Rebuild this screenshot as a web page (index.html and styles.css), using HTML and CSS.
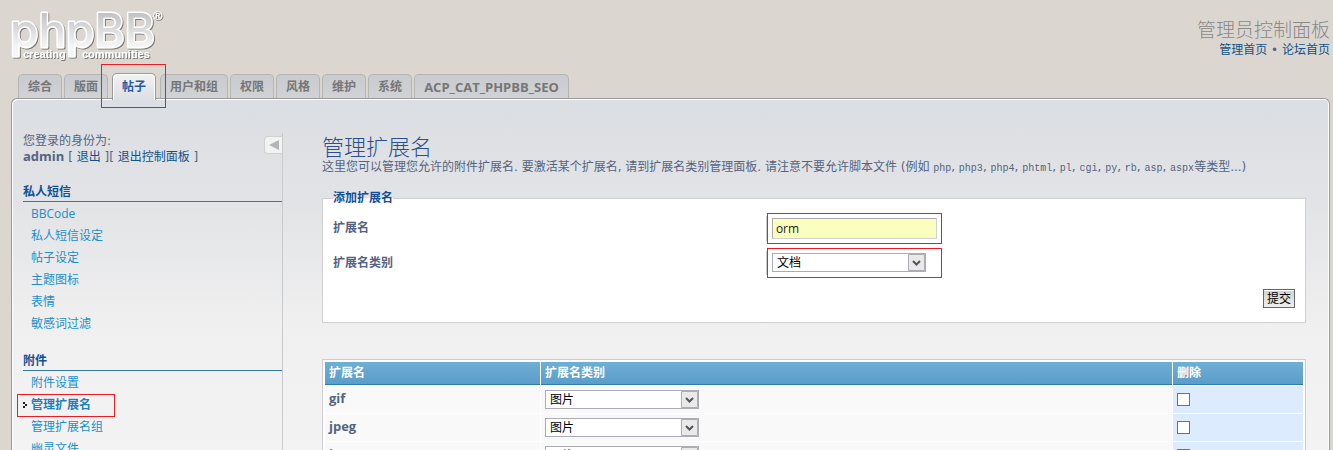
FILE: index.html
```html
<!DOCTYPE html>
<html lang="zh-CN">
<head>
<meta charset="utf-8">
<title>管理员控制面板</title>
<link rel="stylesheet" href="styles.css">
</head>
<body>
<header class="top">
  <svg class="logo" width="156" height="66" viewBox="0 0 156 66" role="img" aria-label="phpBB creating communities">
    <defs>
      <linearGradient id="metal" x1="0" y1="0" x2="0" y2="1">
        <stop offset="0.2" stop-color="#c2c2c2"/>
        <stop offset="0.8" stop-color="#f6f6f6"/>
      </linearGradient>
      <filter id="shade" x="-10%" y="-10%" width="120%" height="130%">
        <feDropShadow dx="1" dy="1" stdDeviation="0.7" flood-color="#666" flood-opacity="0.85"/>
      </filter>
    </defs>
    <g filter="url(#shade)">
      <text class="logo-word" x="-1" y="47">phpBB</text>
      <text class="logo-tag" x="12" y="58">creating</text>
      <text class="logo-tag" x="71" y="58">communities</text>
      <text class="logo-mark" x="142" y="20">®</text>
    </g>
  </svg>
  <div class="site">
    <p class="site-title">管理员控制面板</p>
    <p class="site-links"><a href="#">管理首页</a> • <a href="#">论坛首页</a></p>
  </div>
</header>

<nav class="tabs">
  <a class="tab" href="#">综合</a>
  <a class="tab" href="#">版面</a>
  <a class="tab active" href="#">帖子</a>
  <a class="tab" href="#">用户和组</a>
  <a class="tab" href="#">权限</a>
  <a class="tab" href="#">风格</a>
  <a class="tab" href="#">维护</a>
  <a class="tab" href="#">系统</a>
  <a class="tab latin" href="#">ACP_CAT_PHPBB_SEO</a>
</nav>

<div class="panel">
  <aside class="side">
    <button class="collapse" type="button" aria-label="收起菜单"><svg width="10" height="10" viewBox="0 0 10 10"><path d="M0 5 10 0V10Z" fill="#b5b5b9"/></svg></button>
    <p class="login">您登录的身份为:<br><strong class="latin">admin</strong> [ <a href="#">退出</a> ][ <a href="#">退出控制面板</a> ]</p>
    <h2 class="menu-title">私人短信</h2>
    <ul class="menu">
      <li><a href="#">BBCode</a></li>
      <li><a href="#">私人短信设定</a></li>
      <li><a href="#">帖子设定</a></li>
      <li><a href="#">主题图标</a></li>
      <li><a href="#">表情</a></li>
      <li><a href="#">敏感词过滤</a></li>
    </ul>
    <h2 class="menu-title">附件</h2>
    <ul class="menu">
      <li><a href="#">附件设置</a></li>
      <li class="current"><svg class="pointer" width="4" height="6" viewBox="0 0 4 6"><path d="M0 0H2V2H4V4H2V6H0V4H2V2H0Z" fill="#222"/></svg><a href="#">管理扩展名</a></li>
      <li><a href="#">管理扩展名组</a></li>
      <li><a href="#">幽灵文件</a></li>
    </ul>
  </aside>

  <main class="main">
    <h1 class="title">管理扩展名</h1>
    <p class="intro">这里您可以管理您允许的附件扩展名. 要激活某个扩展名, 请到扩展名类别管理面板. 请注意不要允许脚本文件 (例如 <code>php</code>, <code>php3</code>, <code>php4</code>, <code>phtml</code>, <code>pl</code>, <code>cgi</code>, <code>py</code>, <code>rb</code>, <code>asp</code>, <code>aspx</code>等类型...)</p>

    <form>
      <fieldset class="box">
        <legend>添加扩展名</legend>
        <div class="row">
          <label for="ext">扩展名</label>
          <div class="field marked"><input class="text" id="ext" type="text" value="orm"></div>
        </div>
        <div class="row">
          <label for="group">扩展名类别</label>
          <div class="field marked"><select class="select" id="group"><option>文档</option><option>图片</option></select></div>
        </div>
        <div class="actions"><button class="submit" type="submit">提交</button></div>
      </fieldset>

      <table class="list">
        <thead>
          <tr><th class="col-ext">扩展名</th><th>扩展名类别</th><th class="col-del">删除</th></tr>
        </thead>
        <tbody>
          <tr><td><strong class="latin">gif</strong></td><td><select class="select" aria-label="gif 类别"><option>图片</option></select></td><td class="del"><input class="check" type="checkbox" aria-label="删除 gif"></td></tr>
          <tr><td><strong class="latin">jpeg</strong></td><td><select class="select" aria-label="jpeg 类别"><option>图片</option></select></td><td class="del"><input class="check" type="checkbox" aria-label="删除 jpeg"></td></tr>
          <tr><td><strong class="latin">jpg</strong></td><td><select class="select" aria-label="jpg 类别"><option>图片</option></select></td><td class="del"><input class="check" type="checkbox" aria-label="删除 jpg"></td></tr>
        </tbody>
      </table>
    </form>
  </main>
</div>
</body>
</html>
```
FILE: styles.css
```css
*, *::after { box-sizing: border-box; }

body {
  margin: 0;
  padding: 0 3px 0 11px;
  height: 100vh;
  overflow: hidden;
  display: flex;
  flex-direction: column;
  background: #dbd7d0;
  color: #536482;
  font: 12px/16px "Open Sans", "Noto Sans CJK SC", sans-serif;
}

h1, h2, p, ul { margin: 0; padding: 0; font-weight: normal; }
ul { list-style: none; }
a { color: #105289; text-decoration: none; }
input, select, button { margin: 0; font: inherit; color: #000; }
.latin { font-size: 13px; }

/* Header */
.top {
  flex: none;
  display: flex;
  justify-content: space-between;
  align-items: flex-start;
  height: 73px;
}
.logo { overflow: visible; }
.logo-word {
  font: 500 46px Inter, sans-serif;
  fill: url(#metal);
  stroke: #fff;
  stroke-width: 3px;
  stroke-linejoin: round;
  paint-order: stroke;
}
.logo-tag { font: 700 11px "Liberation Sans", sans-serif; fill: #fff; }
.logo-mark { font: 700 13px "Liberation Sans", sans-serif; fill: #fff; }
.site { padding-top: 18px; text-align: right; }
.site-title {
  color: #888;
  font-size: 19px;
  font-weight: 300;
  line-height: 24px;
}
.site-links, .login, .intro { font-family: "DejaVu Sans", "Noto Sans CJK SC", sans-serif; }

/* Tabs */
.tabs {
  flex: none;
  position: relative;
  display: flex;
  align-items: flex-end;
  gap: 2px;
  height: 25px;
  padding-left: 7px;
}
.tab {
  height: 24px;
  padding: 0 9px;
  border: 1px solid #b5b5b2;
  border-bottom: 0;
  border-radius: 5px 5px 0 0;
  background: linear-gradient(#cacbce, #d0d2d6);
  color: #767676;
  font-weight: 700;
  line-height: 24px;
}
.active {
  position: relative;
  z-index: 1;
  height: 27px;
  margin: 0 2px -2px;
  border-color: #999;
  box-shadow: inset 1px 1px #fff, inset -1px 0 #fff;
  background: linear-gradient(#f2f2f3, #dcdee2);
  color: #1d5aa5;
  line-height: 26px;
}
.active::after {
  content: "";
  position: absolute;
  inset: -10px -11px -8px -12px;
  border: 1px solid #ed1c24;
}

/* Panel */
.panel {
  flex: 1 0 auto;
  display: flex;
  align-items: flex-start;
  gap: 39px;
  padding: 34px 23px 0 11px;
  border: 1px solid #999;
  border-bottom: 0;
  border-radius: 6px 6px 0 0;
  box-shadow: inset 1px 1px #fff, inset -1px 0 #fff;
  background: linear-gradient(#dbdee2, #e2e3e6 100px, #f0f0f0 230px, #f3f3f3 350px);
}

/* Side menu */
.side {
  position: relative;
  flex: 0 0 260px;
  min-height: 330px;
  border-right: 1px solid #c8cacd;
}
.collapse {
  position: absolute;
  top: 3px;
  right: 0;
  display: grid;
  place-items: center;
  width: 18px;
  height: 18px;
  padding: 0;
  border: 1px solid #d0d0d2;
  border-right: 0;
  border-radius: 4px 0 0 4px;
  background: #f2f2f3;
}
.login { margin-bottom: 19px; }
.login .latin { font-family: "Open Sans", sans-serif; line-height: 1; }
.menu-title {
  padding-bottom: 1px;
  border-bottom: 1px solid #327aa5;
  color: #115098;
  font-size: 12px;
  font-weight: 700;
}
.menu { padding-top: 1px; margin-bottom: 18px; }
.menu li {
  position: relative;
  padding-left: 8px;
  line-height: 22px;
}
.menu a { color: #1a90cc; }
.menu .current a { color: #1e80bb; font-weight: 700; }
.pointer { position: absolute; left: 0; top: 8px; }
.current::after {
  content: "";
  position: absolute;
  left: -6px;
  top: 0;
  width: 98px;
  height: 23px;
  border: 1px solid #ed1c24;
}

/* Main column */
.main { flex: 1; min-width: 0; }
.title {
  color: #2a4f90;
  font-size: 22px;
  font-weight: 300;
  line-height: 26px;
}
.intro { margin-bottom: 15px; }
.intro code { font: 10px/1 "Liberation Mono", monospace; }

.box {
  margin: 0 0 36px;
  padding: 10px;
  border: 1px solid #d0d0d0;
  background: #fff;
}
.box legend { padding: 0; color: #115098; font-weight: 700; }
.row { display: flex; margin-bottom: 10px; }
.row label { width: 45%; line-height: 24px; font-weight: 700; }
.field {
  position: relative;
  padding: 2px 5px;
  border-left: 1px solid #ccc;
}
.marked::after {
  content: "";
  position: absolute;
  inset: -3px auto -3px 0;
  width: 175px;
  border: 1px solid #ed1c24;
  pointer-events: none;
}
.text {
  display: block;
  width: 165px;
  height: 21px;
  padding: 0 3px;
  border: 1px solid #d0d0d0;
  border-top-color: #aaa;
  border-left-color: #aaa;
  background: #faffbd;
  color: #222;
}
.select {
  display: block;
  appearance: none;
  width: 154px;
  height: 19px;
  padding: 0 20px 0 4px;
  border: 1px solid #abadb3;
  border-radius: 0;
  background: #fff url("data:image/svg+xml,%3Csvg xmlns='http://www.w3.org/2000/svg' width='17' height='17'%3E%3Cpath d='M.5.5h16v16H.5z' fill='%23e9e9e9' stroke='%23abadb3'/%3E%3Cpath d='M5 7l3.500 3.500L12 7' fill='none' stroke='%23555' stroke-width='2'/%3E%3C/svg%3E") no-repeat right center;
  line-height: 17px;
}
.actions { display: flex; justify-content: flex-end; padding-top: 4px; margin-bottom: 4px; }
.submit {
  height: 19px;
  padding: 0 3px;
  border: 1px solid #666;
  box-shadow: inset 0 1px #fff;
  background: linear-gradient(#d2d2d2, #efefef);
  line-height: 17px;
}

/* Extension list */
.list {
  width: 100%;
  padding: 1px;
  border: 1px solid #ccccd0;
  border-spacing: 1px;
  background: #fff;
}
.list th {
  height: 23px;
  padding: 0 4px;
  border-bottom: 1px solid #2f7dab;
  background: linear-gradient(#70afd5, #5a9dc8);
  color: #fff;
  text-align: left;
}
.list td {
  height: 27px;
  padding: 4px;
  background: #f9f9f9;
  vertical-align: top;
}
.col-ext { width: 215px; }
.col-del { width: 130px; }
.list .del { background: #dcebfe; }
.check {
  display: block;
  appearance: none;
  width: 13px;
  height: 13px;
  margin-top: 3px;
  border: 1px solid #707070;
  background: #fff;
}
```
